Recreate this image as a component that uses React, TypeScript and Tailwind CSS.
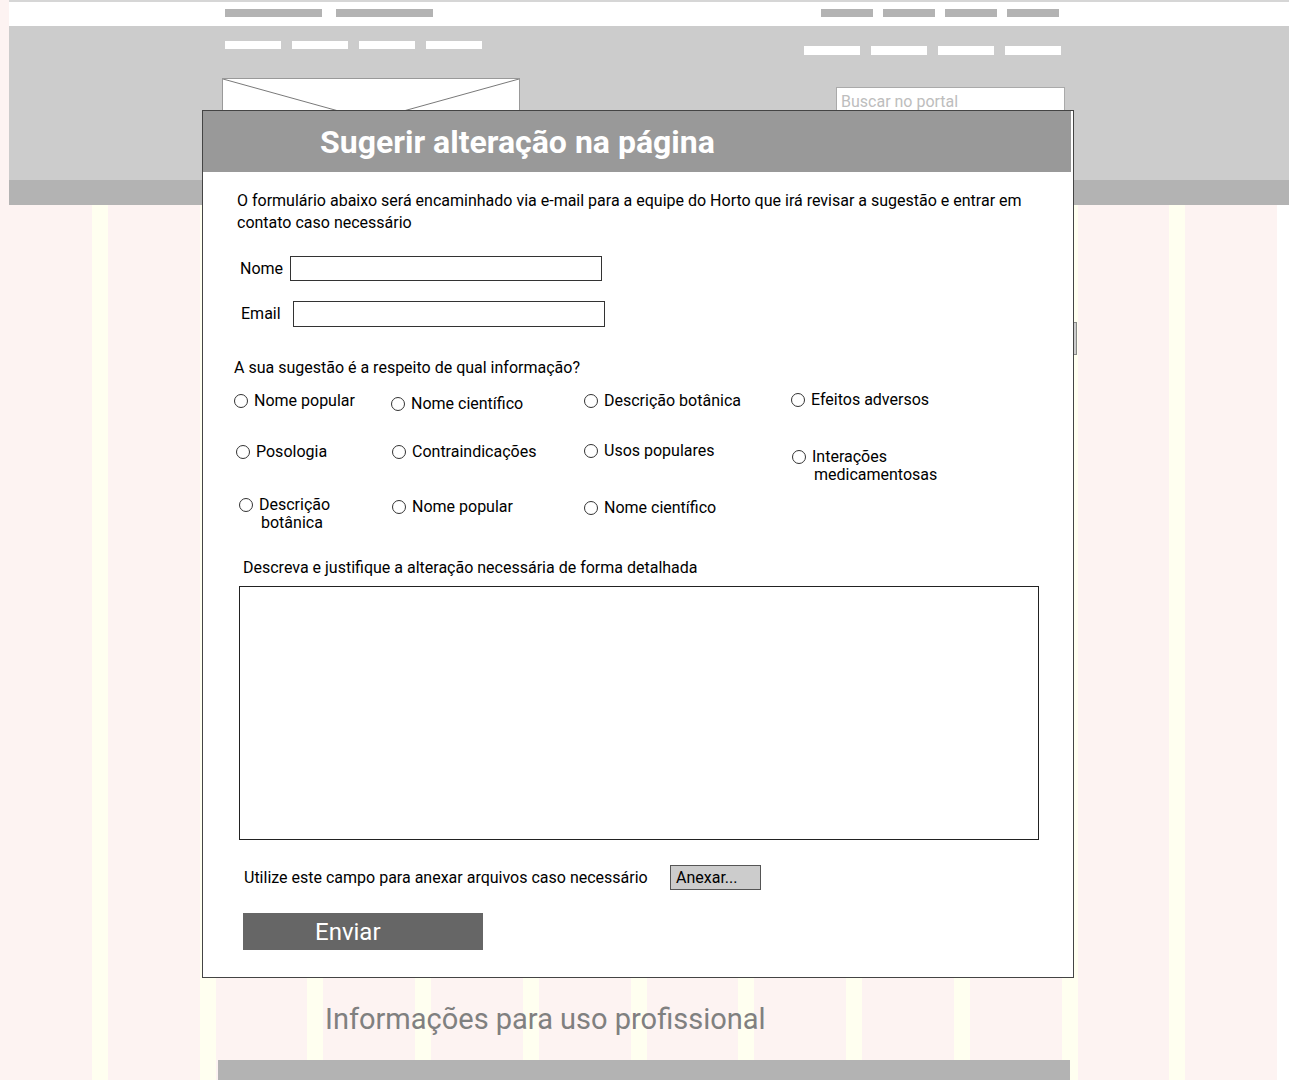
import clsx from 'clsx'

type Opt = {
  lines: string[]
  cls: string
}

const rows: Opt[][] = [
  [
    { lines: ['Nome popular'], cls: 'mt-[1px]' },
    { lines: ['Nome científico'], cls: 'mt-[4px]' },
    { lines: ['Descrição botânica'], cls: 'mt-[1px]' },
    { lines: ['Efeitos adversos'], cls: 'mt-0' },
  ],
  [
    { lines: ['Posologia'], cls: 'mt-[1px] ml-[2px]' },
    { lines: ['Contraindicações'], cls: 'mt-[1px] ml-[1px]' },
    { lines: ['Usos populares'], cls: 'mt-0' },
    { lines: ['Interações', 'medicamentosas'], cls: 'mt-[8px] ml-[1px]' },
  ],
  [
    { lines: ['Descrição', 'botânica'], cls: 'mt-[1px] ml-[5px]' },
    { lines: ['Nome popular'], cls: 'mt-[1px] ml-[1px]' },
    { lines: ['Nome científico'], cls: 'mt-[2px]' },
  ],
]

function Radio({ opt }: { opt: Opt }) {
  const wrapped = opt.lines.length > 1
  return (
    <label className={clsx('flex items-start gap-[6px]', opt.cls)}>
      <span
        className={clsx(
          'h-[14px] w-[14px] shrink-0 rounded-full border border-[#333] bg-white',
          wrapped ? 'mt-[2px]' : 'mt-[4px]'
        )}
      />
      <span className={clsx('text-[16px] text-black', wrapped ? 'leading-[18px]' : 'leading-[22px]')}>
        {opt.lines[0]}
        {wrapped && <span className="block pl-[2px]">{opt.lines[1]}</span>}
      </span>
    </label>
  )
}

function Header() {
  return (
    <header className="ml-[9px] w-[1280px]">
      <div className="h-[26px] border-t-2 border-[#d6d6d6] bg-white">
        <div className="ml-[216px] mt-[7px] flex w-[834px] justify-between">
          <div className="flex gap-[14px]">
            <div className="h-[8px] w-[97px] bg-[#b3b3b3]" />
            <div className="h-[8px] w-[97px] bg-[#b3b3b3]" />
          </div>
          <div className="flex gap-[10px]">
            <div className="h-[8px] w-[52px] bg-[#b3b3b3]" />
            <div className="h-[8px] w-[52px] bg-[#b3b3b3]" />
            <div className="h-[8px] w-[52px] bg-[#b3b3b3]" />
            <div className="h-[8px] w-[52px] bg-[#b3b3b3]" />
          </div>
        </div>
      </div>
      <div className="h-[154px] bg-[#cccccc]">
        <div className="ml-[213px] w-[843px] pt-[15px]">
          <div className="flex items-start justify-between">
            <div className="ml-[3px] flex gap-[11px]">
              <div className="h-[8px] w-[56px] bg-white" />
              <div className="h-[8px] w-[56px] bg-white" />
              <div className="h-[8px] w-[56px] bg-white" />
              <div className="h-[8px] w-[56px] bg-white" />
            </div>
            <div className="mr-[4px] mt-[5px] flex gap-[11px]">
              <div className="h-[9px] w-[56px] bg-white" />
              <div className="h-[9px] w-[56px] bg-white" />
              <div className="h-[9px] w-[56px] bg-white" />
              <div className="h-[9px] w-[56px] bg-white" />
            </div>
          </div>
          <div className="mt-[23px] flex items-start justify-between">
            <div className="h-[84px] w-[298px] border border-[#999] bg-white">
              <svg className="h-full w-full" viewBox="0 0 298 84" preserveAspectRatio="none">
                <line x1="0" y1="0" x2="298" y2="84" stroke="#777" strokeWidth="1" />
                <line x1="298" y1="0" x2="0" y2="84" stroke="#777" strokeWidth="1" />
              </svg>
            </div>
            <div className="mt-[9px] flex h-[30px] w-[229px] items-center border border-[#aaa] bg-white pl-[4px] text-[16px] text-[#bdbdbd]">
              Buscar no portal
            </div>
          </div>
        </div>
      </div>
      <div className="h-[25px] bg-[#b3b3b3]" />
    </header>
  )
}

function Modal() {
  return (
    <div className="absolute left-[202px] top-[110px] h-[868px] w-[872px] border border-[#444] bg-white">
      <div className="mr-[2px] flex h-[61px] items-center bg-[#999999] pl-[117px]">
        <h1 className="text-[32px] font-bold leading-none text-white">Sugerir alteração na página</h1>
      </div>

      <p className="ml-[34px] mt-[18px] w-[800px] text-[16px] leading-[22px] text-black">
        O formulário abaixo será encaminhado via e-mail para a equipe do Horto que irá revisar a sugestão e entrar em
        contato caso necessário
      </p>

      <div className="ml-[37px] mt-[22px] flex items-center">
        <span className="w-[50px] text-[16px]">Nome</span>
        <div className="h-[25px] w-[312px] border border-[#333]" />
      </div>
      <div className="ml-[38px] mt-[20px] flex items-center">
        <span className="w-[52px] text-[16px]">Email</span>
        <div className="h-[26px] w-[312px] border border-[#333]" />
      </div>

      <p className="ml-[31px] mt-[30px] text-[16px] leading-[22px]">A sua sugestão é a respeito de qual informação?</p>

      <div className="ml-[31px] mt-[10px] grid h-[143px] grid-cols-[157px_193px_207px_1fr] grid-rows-[51px_55px_37px] items-start">
        {rows.flat().map((opt, i) => (
          <Radio key={i} opt={opt} />
        ))}
      </div>

      <p className="ml-[40px] mt-[25px] text-[16px] leading-[22px]">
        Descreva e justifique a alteração necessária de forma detalhada
      </p>
      <div className="ml-[36px] mt-[7px] h-[254px] w-[800px] border border-[#222]" />

      <div className="ml-[41px] mt-[25px] flex h-[25px] items-center">
        <span className="w-[426px] text-[16px]">Utilize este campo para anexar arquivos caso necessário</span>
        <button className="flex h-[25px] w-[91px] items-center border border-[#555] bg-[#cccccc] pl-[5px] text-[16px]">
          Anexar...
        </button>
      </div>

      <button className="ml-[40px] mt-[23px] flex h-[37px] w-[240px] items-center bg-[#666666] pl-[72px] text-[24px] text-white">
        Enviar
      </button>
    </div>
  )
}

export default function App() {
  return (
    <div className="relative h-[1080px] overflow-hidden bg-white bg-[repeating-linear-gradient(90deg,#fdf3f2_0px,#fdf3f2_91.75px,#fffff0_91.75px,#fffff0_107.75px)] bg-[length:1277px_100%] bg-no-repeat font-['Roboto',sans-serif] text-black">
      <Header />
      <main className="pl-[218px]">
        <div className="mt-[117px] flex w-[859px] justify-end">
          <div className="h-[33px] w-[80px] border border-[#888] bg-[#cccccc]" />
        </div>
        <h2 className="ml-[107px] mt-[647px] text-[29px] leading-[34px] text-[#808080]">
          Informações para uso profissional
        </h2>
        <div className="mt-[24px] h-[40px] w-[852px] bg-[#b3b3b3]" />
      </main>
      <Modal />
    </div>
  )
}
